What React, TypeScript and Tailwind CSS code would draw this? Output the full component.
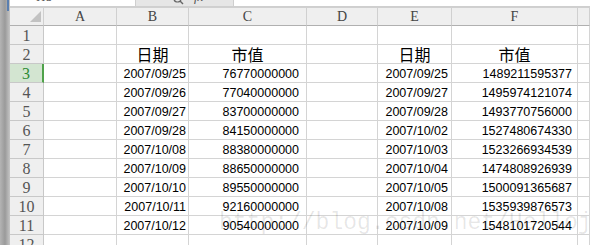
const cols = ["A", "B", "C", "D", "E", "F", ""];

const rows: { b: string; c: string; e: string; f: string }[] = [
  { b: "2007/09/25", c: "76770000000", e: "2007/09/25", f: "1489211595377" },
  { b: "2007/09/26", c: "77040000000", e: "2007/09/27", f: "1495974121074" },
  { b: "2007/09/27", c: "83700000000", e: "2007/09/28", f: "1493770756000" },
  { b: "2007/09/28", c: "84150000000", e: "2007/10/02", f: "1527480674330" },
  { b: "2007/10/08", c: "88380000000", e: "2007/10/03", f: "1523266934539" },
  { b: "2007/10/09", c: "88650000000", e: "2007/10/04", f: "1474808926939" },
  { b: "2007/10/10", c: "89550000000", e: "2007/10/05", f: "1500091365687" },
  { b: "2007/10/11", c: "92160000000", e: "2007/10/08", f: "1535939876573" },
  { b: "2007/10/12", c: "90540000000", e: "2007/10/09", f: "1548101720544" },
];

const cell = "h-[19px] border-r border-b border-[#d4d4d4] bg-white";
const num = "flex items-end justify-end leading-[15px] text-[12.5px] text-black font-['Liberation_Sans',Arial,sans-serif]";
const head = "flex items-end justify-center leading-[18px] text-[16px] text-black font-['Noto_Sans_CJK_SC',sans-serif]";

function RowHead({ n, active }: { n: number; active?: boolean }) {
  return (
    <div
      className={
        active
          ? "flex h-[19px] items-center justify-center border-b border-r-2 border-b-[#c8c8c8] border-r-[#4fa24a] bg-[#d3e5d1] font-['Liberation_Serif',serif] text-[16px] leading-[19px] text-[#2d8a33]"
          : "flex h-[19px] items-center justify-center border-b border-r border-[#c8c8c8] bg-[#efefef] font-['Liberation_Serif',serif] text-[16px] leading-[19px] text-[#555]"
      }
    >
      {n}
    </div>
  );
}

export default function App() {
  return (
    <div className="relative flex h-[245px] w-[590px] overflow-hidden bg-white">
      <div className="relative w-[10px] shrink-0 bg-gradient-to-r from-[#b4b4b4] via-[#9a9a9a] to-[#c6c6c6]">
        <div className="absolute right-[1px] top-0 h-[11px] w-[2px] bg-[#5a7fb0]" />
      </div>

      <div className="flex flex-1 flex-col">
        <div className="h-[11px] border-b border-[#d0d0d0] bg-[#ececec]">
          <div className="flex h-[7px] border-b border-[#cfcfcf]">
            <div className="relative w-[125px] overflow-hidden bg-white">
              <span className="absolute left-[26px] top-[-10px] font-['Liberation_Serif',serif] text-[13px] leading-[14px] text-[#555]">
                H8
              </span>
            </div>
            <div className="relative w-[98px] overflow-hidden border-l border-[#cfcfcf] bg-[#e6e6e6]">
              <svg className="absolute left-[37px] top-[-6px]" width="11" height="11" viewBox="0 0 11 11">
                <circle cx="4.5" cy="4.5" r="3.5" fill="none" stroke="#666" strokeWidth="1.2" />
                <path d="M7 7 L10 10" stroke="#666" strokeWidth="1.4" />
              </svg>
              <span className="absolute left-[58px] top-[-10px] font-['Liberation_Serif',serif] text-[13px] italic leading-[14px] text-[#555]">
                fx
              </span>
            </div>
            <div className="flex-1 border-l border-[#cfcfcf] bg-white" />
          </div>
        </div>

        <div className="grid grid-cols-[34px_73px_72px_118px_71px_74px_126px_1fr]">
          <div className="relative h-[18px] border-b border-r border-b-[#b0b0b0] border-r-[#d0d0d0] bg-[#efefef]">
            <div className="absolute bottom-[3px] right-[2px] h-0 w-0 border-b-[11px] border-l-[11px] border-b-[#c2c2c2] border-l-transparent" />
          </div>
          {cols.map((c, i) => (
            <div
              key={i}
              className="flex h-[18px] items-center justify-center border-b border-r border-b-[#b0b0b0] border-r-[#d0d0d0] bg-[#efefef] font-['Liberation_Serif',serif] text-[14px] leading-[18px] text-[#444]"
            >
              {c}
            </div>
          ))}

          <RowHead n={1} />
          {cols.map((_, i) => (
            <div key={i} className={cell} />
          ))}

          <RowHead n={2} />
          <div className={cell} />
          <div className={`${cell} ${head}`}>日期</div>
          <div className={`${cell} ${head}`}>市值</div>
          <div className={cell} />
          <div className={`${cell} ${head}`}>日期</div>
          <div className={`${cell} ${head}`}>市值</div>
          <div className={cell} />

          {rows.map((r, i) => (
            <div key={i} className="contents">
              <RowHead n={i + 3} active={i === 0} />
              <div className={cell} />
              <div className={`${cell} ${num} pr-[2px]`}>{r.b}</div>
              <div className={`${cell} ${num} pr-[7px]`}>{r.c}</div>
              <div className={cell} />
              <div className={`${cell} ${num} pr-[3px]`}>{r.e}</div>
              <div className={`${cell} ${num} pr-[5px]`}>{r.f}</div>
              <div className={cell} />
            </div>
          ))}

          <RowHead n={12} />
          {cols.map((_, i) => (
            <div key={i} className={cell} />
          ))}
        </div>
      </div>

      <div className="pointer-events-none absolute left-[219px] top-[210px] whitespace-nowrap font-['Liberation_Mono',monospace] text-[23px] leading-[26px] text-black/10">
        http://blog.csdn.net/Hellojiajia_lly
      </div>
    </div>
  );
}
